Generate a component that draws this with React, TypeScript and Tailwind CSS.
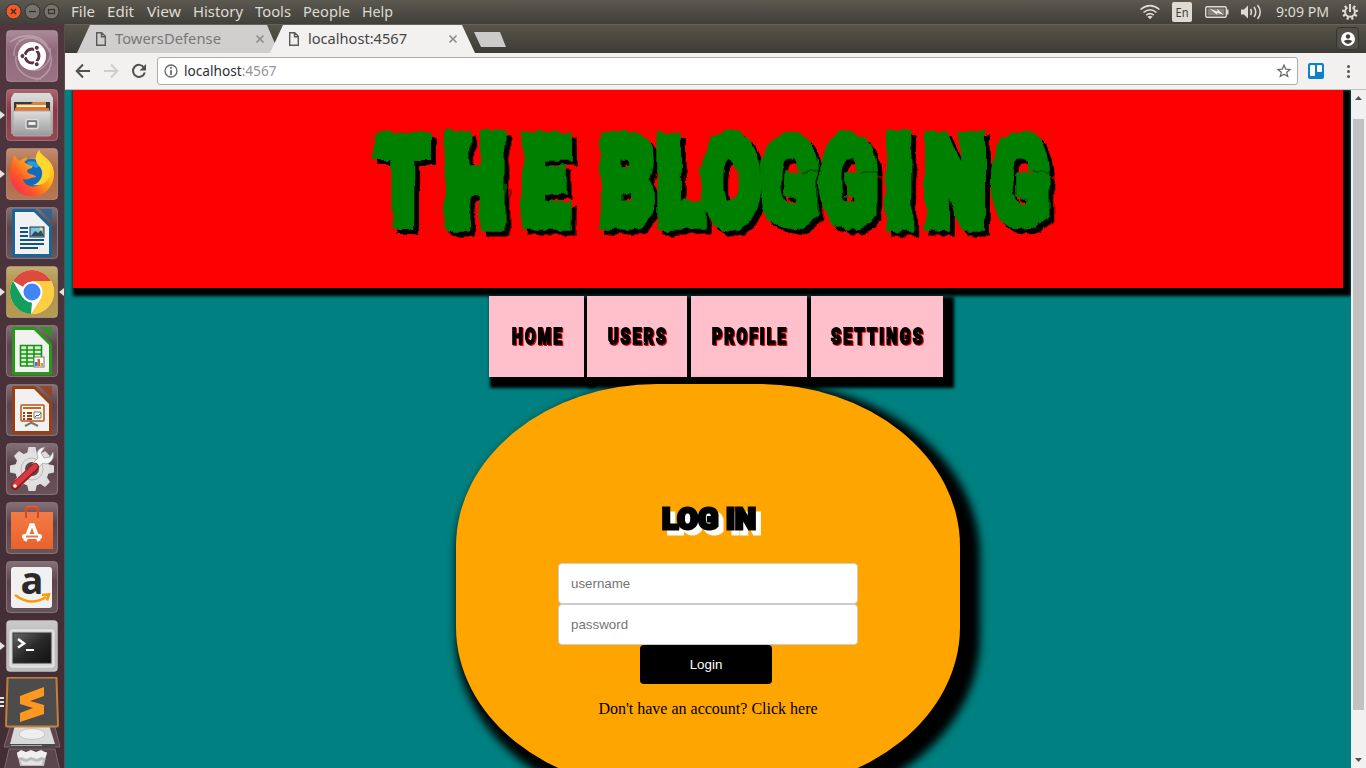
import type { ReactNode } from "react";

const menus: [string, string][] = [
  ["File", "w-9"], ["Edit", "w-10"], ["View", "w-[46px]"], ["History", "w-[62px]"],
  ["Tools", "w-12"], ["People", "w-[59px]"], ["Help", "w-9"],
];

/* Label stretched to the exact width of the desktop's own face. */
function Label({ text, width, size = 15, color = "#dfdbd2", height = 20, baseline = 15 }: { text: string; width: number; size?: number; color?: string; height?: number; baseline?: number }) {
  return (
    <svg width={width} height={height} className="block shrink-0 overflow-visible">
      <text x="0" y={baseline} fill={color} fontSize={size} fontFamily="'Noto Sans', 'Open Sans', sans-serif" textLength={width} lengthAdjust="spacingAndGlyphs">{text}</text>
    </svg>
  );
}

const menuWidths = [24, 27, 34, 50, 36, 47, 31];

function WindowButtons() {
  return (
    <svg width="65" height="24" className="block shrink-0">
      <circle cx="13.500" cy="11.500" r="7.500" fill="#ef5b2d" stroke="#34332e" />
      <path d="M11 9l5 5M16 9l-5 5" stroke="#4b261a" strokeWidth="1.4" />
      <circle cx="32.500" cy="11.500" r="7.500" fill="#75736b" stroke="#34332e" />
      <path d="M29 11.500h7" stroke="#34332e" strokeWidth="1.3" />
      <circle cx="51.500" cy="11.500" r="7.500" fill="#75736b" stroke="#34332e" />
      <rect x="48.500" y="9.500" width="6" height="4" fill="none" stroke="#34332e" strokeWidth="1.2" />
    </svg>
  );
}

function Indicators() {
  return (
    <div className="flex h-6 items-center">
      <svg width="136" height="24" className="block">
        <g fill="none" stroke="#dfdbd2" strokeWidth="1.6">
          <path d="M10.500 9.500Q20 1.800 29.500 9.500M13.500 12.500Q20 7 26.500 12.500M16.200 15.200Q20 12 23.800 15.200" />
        </g>
        <path d="M17.500 16.700Q20 15 22.500 16.700L20 19.200z" fill="#dfdbd2" />
        <rect x="42" y="2" width="20" height="20" rx="2" fill="#dfdbd2" />
        <text x="52" y="17" textAnchor="middle" textLength="13" lengthAdjust="spacingAndGlyphs" fontSize="13" fontFamily="'Noto Sans',sans-serif" fill="#3c3b37">En</text>
        <rect x="75.700" y="6.700" width="20.600" height="10.600" rx="1.500" fill="none" stroke="#dfdbd2" strokeWidth="1.400" />
        <rect x="77.500" y="8.500" width="17" height="7" fill="#85837b" />
        <path d="M97 9.500h1.500v5H97z" fill="#dfdbd2" />
        <path d="M79.500 8.500l8 3.200-.3-2.700 6.300 5.800-6.500-2 .3 2.200z" fill="#f2eee5" />
        <path d="M111 9.500h3l4-4v13l-4-4h-3z" fill="#dfdbd2" />
        <path d="M120.500 9q2 3 0 6M124 7q3.500 5 0 10M127.500 5q5.500 7 0 14" fill="none" stroke="#dfdbd2" strokeWidth="1.500" />
      </svg>
      <div className="ml-[10px]"><Label text="9:09 PM" width={53} size={14.5} /></div>
      <svg width="37" height="24" className="block">
        <g transform="translate(21 12)" fill="none" stroke="#dfdbd2">
          <path d="M-2.500 -4.500A5 5 0 1 0 2.500 -4.500" strokeWidth="2" />
          <path d="M0 -8V0" strokeWidth="2" />
          {[40, 80, 120, 160, 200, 240, 280, 320].map((a) => <path key={a} d="M0 -5.500V-8" strokeWidth="2.200" transform={`rotate(${a})`} />)}
        </g>
      </svg>
    </div>
  );
}

function PageIcon() {
  return <svg width="12" height="16" className="block shrink-0"><path d="M1.700 1.700h5l3.600 3.600v9H1.700zM6.500 2v3.700h3.700" fill="none" stroke="#5a5a5a" strokeWidth="1.400" /></svg>;
}
function CloseIcon() {
  return <svg width="10" height="10" className="block shrink-0"><path d="M1.500 1.500l7 7M8.500 1.500l-7 7" stroke="#8a8a8a" strokeWidth="1.600" /></svg>;
}

function Tile({ bg, mark, children }: { bg: string; mark?: "left" | "both"; children: ReactNode }) {
  return (
    <div className="flex h-[59px] shrink-0">
      <svg width="65" height="53" viewBox="0 0 65 53" className="block shrink-0 overflow-visible">
        {mark && <path d="M0 22l5 4-5 4z" fill="#e5e3df" />}
        {mark === "both" && <path d="M64 22l-5 4 5 4z" fill="#e5e3df" />}
        <rect x="6.500" y=".5" width="51" height="51" rx="3.500" fill={bg} stroke="#fff" strokeOpacity=".3" />
        <rect x="7" y="1" width="50" height="50" rx="3" fill="url(#tileShine)" />
        <g transform="translate(6 0)">{children}</g>
      </svg>
    </div>
  );
}

function Doc({ edge, children }: { edge: string; children: ReactNode }) {
  return (
    <g>
      <path d="M8 2h21l17 17v29q0 2-2 2H8q-2 0-2-2V4q0-2 2-2z" fill={edge} />
      <path d="M33 2h13v12z" fill={edge} opacity=".75" />
      <path d="M9 5h19l15 15v27H9z" fill="#f1f1f1" />
      {children}
    </g>
  );
}

function Dock() {
  return (
    <aside className="flex w-[65px] shrink-0 flex-col overflow-hidden border-r border-[#5e4b52] bg-linear-to-b from-[#50363e] to-[#422d35] pt-[6px]">
      <svg width="0" height="0" className="absolute">
        <defs>
          <linearGradient id="tileShine" x2="0" y2="1"><stop stopColor="#fff" stopOpacity=".25" /><stop offset=".4" stopColor="#fff" stopOpacity=".02" /><stop offset="1" stopColor="#fff" stopOpacity=".1" /></linearGradient>
          <linearGradient id="metal" x2="0" y2="1"><stop stopColor="#ddd" /><stop offset="1" stopColor="#999" /></linearGradient>
          <linearGradient id="fire" x1="1" x2="0" y2="1"><stop stopColor="#fff44a" /><stop offset=".4" stopColor="#ffae13" /><stop offset=".7" stopColor="#ff512b" /><stop offset="1" stopColor="#f51d6b" /></linearGradient>
          <linearGradient id="bag" x2="0" y2="1"><stop stopColor="#f47b45" /><stop offset="1" stopColor="#e9622b" /></linearGradient>
          <linearGradient id="screen" x2="1" y2="1"><stop stopColor="#666" /><stop offset=".5" stopColor="#292929" /><stop offset="1" stopColor="#101010" /></linearGradient>
          <filter id="ragged" x="-5%" y="-10%" width="110%" height="120%">
            <feTurbulence type="fractalNoise" baseFrequency=".11 .04" numOctaves="2" seed="8" />
            <feDisplacementMap in="SourceGraphic" scale="8" xChannelSelector="R" yChannelSelector="G" result="letters" />
            <feColorMatrix in="letters" values="0 0 0 0 0 0 0 0 0 0 0 0 0 0 0 0 0 0 1 0" />
            <feOffset dx="5" dy="5" result="shade" />
            <feMerge><feMergeNode in="shade" /><feMergeNode in="letters" /></feMerge>
          </filter>
          <filter id="rough" x="-10%" y="-20%" width="120%" height="140%">
            <feTurbulence type="fractalNoise" baseFrequency=".25" numOctaves="1" seed="4" />
            <feDisplacementMap in="SourceGraphic" scale="2" xChannelSelector="R" yChannelSelector="G" />
          </filter>
        </defs>
      </svg>
      <Tile bg="#8f6476">
        <g fill="none" stroke="#fff" strokeOpacity=".28">
          <path d="M8 26C7 8 26 2 38 14s9 30-8 36M44 18C47 34 33 45 20 38M4 12C18 2 38 4 43 20M10 26c-2 13 9 23 25 23" strokeWidth="1.500" />
        </g>
        <circle cx="26" cy="26" r="14" fill="#fff" />
        <circle cx="26" cy="26" r="7" fill="none" stroke="#5d3444" strokeWidth="3" />
        {[60, 180, 300].map((a) => <g key={a} transform={`rotate(${a} 26 26)`}><path d="M31 26h5" stroke="#fff" strokeWidth="2" /><circle cx="35.500" cy="26" r="2.500" fill="#5d3444" stroke="#fff" strokeWidth="1" /></g>)}
      </Tile>
      <Tile bg="#8b3340" mark="left">
        <path d="M8 4h36l3 5v36H5V9z" fill="url(#metal)" />
        <path d="M8 13h36v10H8z" fill="#383838" />
        <path d="M10 15h15l2-2h13v8H10z" fill="#d78337" /><path d="M11 16h29v2H11z" fill="#fff0ca" /><path d="M9 19h34v4H9z" fill="#e4752e" />
        <path d="M7 22h38v23q0 2-2 2H9q-2 0-2-2z" fill="url(#metal)" stroke="#aaa" />
        <rect x="20" y="30.500" width="12" height="9" rx="1.500" fill="#777" stroke="#ddd" strokeWidth="1.500" /><rect x="22.500" y="33" width="7" height="3" fill="#eee" />
      </Tile>
      <Tile bg="#ae6841" mark="left">
        <path d="M33 2c2 7 15 9 15 24a22 22 0 0 1-44 1C4 20 6 13 8 7l5 6 8-4-2 5 7-4c8 1 12 3 10-1-3-3-4-5-3-7z" fill="url(#fire)" />
        <path d="M18 14q9-7 17 1c6 7 5 21-4 23-8 2-14-3-14-7 5 2 8-2 13-2-1-3-5-2-8-4-2-3 0-4 4-5l1-3-6-1z" fill="#1269bd" />
        <path d="M21 14q10-3 15 6-3-2-6 0l-3-2-5-1z" fill="#249ce0" />
        <path d="M33 2c-5 7-4 12 1 17 5 6 1 16-7 18 13 2 20-8 16-20 1 2 2 4 2 5 1-8-11-11-12-20z" fill="#ffd62e" />
      </Tile>
      <Tile bg="#594049">
        <Doc edge="#17669a">
          <path d="M14 21h8M14 25h8M14 29h8M14 33h24M14 37h24M14 41h18" stroke="#14547d" strokeWidth="2" />
          <rect x="24" y="20" width="14" height="10" fill="#79c3e8" stroke="#20384a" /><path d="M25 29l4-5 3 2 3-3 3 6z" fill="#364c4b" /><circle cx="35" cy="22" r="1.500" fill="#ffe04f" />
        </Doc>
      </Tile>
      <Tile bg="#ad9040" mark="both">
        <circle cx="26" cy="26" r="22" fill="#fff" />
        <path d="M26 26L7 15A22 22 0 0 1 45 15H26z" fill="#dd4b3e" />
        <path d="M7 15l9.500 16.500L26 37l-1 11A22 22 0 0 1 7 15z" fill="#129e5c" />
        <path d="M26 15h19a22 22 0 0 1-20 33l10.500-16.500z" fill="#ffcd42" />
        <circle cx="26" cy="26" r="10.500" fill="#fff" /><circle cx="26" cy="26" r="8.500" fill="#4285f4" />
      </Tile>
      <Tile bg="#594049">
        <Doc edge="#259915">
          <path d="M14 20h22v21H14z" fill="#cefbc8" /><path d="M14 20.500h22M14 25h22M14 29h22M14 33h22M14 37h22M14 41h22M14.500 20v21M21 20v21M28 20v21M35.500 20v21" stroke="#218c17" strokeWidth="1.600" />
          <rect x="28" y="32" width="10" height="10" fill="#fff" stroke="#777" /><path d="M29 37h2.500v4H29z" fill="#1785cb" /><path d="M31.500 34H34v7h-2.500z" fill="#e35c20" /><path d="M34.500 38H37v3h-2.500z" fill="#dda224" />
        </Doc>
      </Tile>
      <Tile bg="#594049">
        <Doc edge="#984011">
          <rect x="15" y="21" width="23" height="16" rx="1" fill="#fff8ef" stroke="#ba4f18" strokeWidth="1.500" /><path d="M17 24h18" stroke="#d16126" strokeWidth="2" />
          <path d="M17 29h2M21 29h5M17 32h2M21 32h5M17 35h2M21 35h5" stroke="#9b3b10" strokeWidth="2" /><path d="M28 28h7v6h-7z" fill="#fff" stroke="#777" /><path d="M29 33l2-2 1 1 3-3" fill="none" stroke="#238a34" />
          <path d="M25 37v2l-6 3M26 39l6 3" fill="none" stroke="#777" strokeWidth="2" />
        </Doc>
      </Tile>
      <Tile bg="#594049">
        <g transform="translate(26 26)">
          {[0, 45, 90, 135, 180, 225, 270, 315].map((a) => <path key={a} d="M-5-15l1.500-7h7L5-15z" fill="#ddd" transform={`rotate(${a})`} />)}
          <circle r="12" fill="none" stroke="#e1e1e1" strokeWidth="10" /><circle r="11" fill="none" stroke="#bbb" />
        </g>
        <path d="M31 26l-5-5 6-6q-3-7 3-10l4-1-4 6 3 5 6-1 3-5q2 7-4 11-3 2-6 0z" fill="#f5f5f5" stroke="#999" strokeWidth=".7" />
        <path d="M9 43L29 24" stroke="#921c20" strokeWidth="8" strokeLinecap="round" /><path d="M9 42L29 23.500" stroke="#d53a3c" strokeWidth="5.500" strokeLinecap="round" /><circle cx="9" cy="43" r="1.800" fill="#fff" />
      </Tile>
      <Tile bg="#594049">
        <path d="M20 13V8q0-3 3-3h6q3 0 3 3v5" fill="none" stroke="#e75e32" strokeWidth="2.500" />
        <path d="M5 10h42v37H5z" fill="url(#bag)" />
        <path d="M20 16V8q0-2 3-2h6q3 0 3 2v8" fill="none" stroke="#c94d29" strokeWidth="2" />
        <path d="M19 39l6-16h2l6 16" fill="none" stroke="#fff" strokeWidth="3.600" /><path d="M18.500 34.500h15" stroke="#fff" strokeWidth="5" strokeLinecap="round" /><path d="M20 34.500h12" stroke="#ed7245" strokeWidth="2" />
      </Tile>
      <Tile bg="#594049">
        <rect x="5" y="6" width="41" height="41" rx="3" fill="#f1f1f1" />
        <text x="26" y="33" textAnchor="middle" fontFamily="'Open Sans',sans-serif" fontWeight="700" fontSize="38" fill="#292929">a</text>
        <path d="M9 34q16 12 31 2M36 34l7-.5-2 6" fill="none" stroke="#ff9900" strokeWidth="2.500" />
      </Tile>
      <Tile bg="#b8b8b8" mark="left">
        <rect x="4" y="10" width="44" height="37" rx="2" fill="#d5d5d5" stroke="#eee" /><rect x="7" y="13" width="38" height="30" fill="url(#screen)" stroke="#333" />
        <path d="M12 19l6 4.500-6 4" fill="none" stroke="#fff" strokeWidth="2.500" /><path d="M20 30h8" stroke="#fff" strokeWidth="2" />
      </Tile>
      <svg width="65" height="91" viewBox="0 0 65 91" className="-mt-[2px] block shrink-0">
        <path d="M0 21h4M0 25h4M0 29h4" stroke="#e5e3df" strokeWidth="2" />
        <path d="M10 50h45l5 20H4z" fill="#5c464e" stroke="#7d6870" />
        <path d="M15 48h34l6 19H10z" fill="#dadada" /><ellipse cx="32" cy="57" rx="13" ry="5.500" fill="#eee" stroke="#c3c3c3" /><path d="M10 67h45v4H10z" fill="#4a4a4a" /><path d="M11 68h31v1H11z" fill="#aaa" />
        <path d="M9 72h46l5 22H4z" fill="#5c464e" stroke="#7d6870" />
        <path d="M17 75h30l-3 14H20z" fill="#bcbcbc" /><path d="M17 76l4-3 5 2 5-2 5 2 5-2 6 3-2 5-4-1-4 2-6-2-5 2-4-2-4 1z" fill="#f0f0f0" /><path d="M20 83l6 2 5-2 6 2 6-2-1 5H22z" fill="#e3e3e3" />
        <path d="M7.500 1.500q0-1 1-1h47q1 0 1 1l1.500 47q0 1-1 1H7q-1 0-1-1z" fill="#4c4c4c" stroke="#c1813c" strokeWidth="2" />
        <path d="M20 19l24-9v9l-14 5 14 4v9l-24 8v-9l13-5-13-4z" fill="#ff9820" />
      </svg>
    </aside>
  );
}

function Toolbar() {
  return (
    <div className="flex h-[37px] shrink-0 items-center border-b border-[#c4c3c1] bg-[#f2f1f0]">
      <svg width="92" height="36" className="block shrink-0">
        <path d="M25 18H12M18 11.500L11.700 18l6.300 6.500" fill="none" stroke="#505050" strokeWidth="2" />
        <path d="M39 18h13M46 11.500l6.300 6.500-6.300 6.500" fill="none" stroke="#cecece" strokeWidth="2" />
        <path d="M79 14.500a6 6 0 1 0 .8 5" fill="none" stroke="#505050" strokeWidth="2" /><path d="M81 11v6.500h-6.500z" fill="#505050" />
      </svg>
      <div className="flex h-7 w-[1141px] items-center justify-between rounded-[3px] border border-[#adacab] bg-white pr-[5px] pl-[6px]">
        <div className="flex items-center">
          <svg width="14" height="14" className="mr-[6px]"><circle cx="7" cy="7" r="6" fill="none" stroke="#666" strokeWidth="1.300" /><path d="M7 6v5M7 3v1.700" stroke="#666" strokeWidth="1.700" /></svg>
          <svg width="93" height="20" className="block overflow-visible">
            <text x="0" y="15" fill="#303030" fontSize="14.500" fontFamily="'Noto Sans',sans-serif" textLength="92.500" lengthAdjust="spacingAndGlyphs">localhost<tspan fill="#969696">:4567</tspan></text>
          </svg>
        </div>
        <svg width="16" height="16"><path d="M8 2l1.700 4.100 4.400.3-3.400 2.900 1.100 4.300L8 11.300l-3.800 2.300 1.100-4.300-3.400-2.900 4.400-.3z" fill="none" stroke="#666" strokeWidth="1.200" /></svg>
      </div>
      <svg width="68" height="36" className="block"><rect x="10" y="10" width="16" height="16" rx="2" fill="#0a83ca" /><rect x="12" y="12" width="5" height="11" rx="1" fill="#fff" /><rect x="19" y="12" width="5" height="7" rx="1" fill="#fff" /><circle cx="50.500" cy="13.500" r="1.500" fill="#555" /><circle cx="50.500" cy="18.500" r="1.500" fill="#555" /><circle cx="50.500" cy="23.500" r="1.500" fill="#555" /></svg>
    </div>
  );
}

/* Each letter of the wordmark: character, centre and outline weight. */
const titleLetters: [string, number, number][] = [
  ["T", 403, 12], ["H", 475, 16], ["E", 545, 13], [" ", 590, 0],
  ["B", 627, 13], ["L", 680, 13], ["O", 730, 13], ["G", 789, 11],
  ["G", 848, 11], ["I", 899, 17], ["N", 955, 15], ["G", 1020, 11],
];

const navItems = [
  { name: "HOME", box: "w-[95px]", text: 52 },
  { name: "USERS", box: "ml-[3px] w-[100px]", text: 60 },
  { name: "PROFILE", box: "ml-1 w-[116px]", text: 76 },
  { name: "SETTINGS", box: "ml-1 w-[132px]", text: 94 },
];

function BlogPage() {
  return (
    <main className="min-w-0 flex-1 overflow-hidden bg-[#008080] pl-2">
      <header className="h-[198px] w-[1270px] bg-[#ff0000] shadow-[4px_4px_3px_4px_#000]">
        <h1>
          <svg width="1270" height="198" viewBox="73 90 1270 198" className="block">
            <g filter="url(#ragged)">
              <text transform="scale(.7 1)" y="223" fill="#008000" stroke="#008000" fontFamily="Roboto, sans-serif" fontWeight="900" fontSize="119" textAnchor="middle">
                {titleLetters.map(([char, centre, weight], i) => <tspan key={i} x={centre / 0.7} strokeWidth={weight}>{char}</tspan>)}
              </text>
            </g>
          </svg>
        </h1>
      </header>
      <nav className="mt-2 ml-[416px] flex h-[81px]">
        {navItems.map((n) => (
          <a key={n.name} className={`flex items-center justify-center shadow-[6px_6px_3px_5px_#000] ${n.box}`}>
            <span className="flex h-full w-full items-center justify-center bg-[#ffc0cb]">
              <svg width={n.text} height="24" className="block overflow-visible drop-shadow-[1px_1px_0_#f00]">
                <text x="1" y="19" filter="url(#rough)" fill="#000" stroke="#000" strokeWidth="1.8" fontFamily="Roboto,sans-serif" fontSize="22" fontWeight="900" letterSpacing="3" textLength={n.text} lengthAdjust="spacingAndGlyphs">{n.name}</text>
              </svg>
            </span>
          </a>
        ))}
      </nav>
      <section className="relative mt-[7px] ml-[383px] flex h-[405px] w-[504px] flex-col items-center rounded-[40%] bg-[#ffa500] pt-[116px] shadow-[10px_10px_8px_10px_#000]">
        <h2>
          <svg width="96" height="40" className="block overflow-visible drop-shadow-[5px_5px_0_#fff]">
            <text x="2" y="29" fill="#000" stroke="#000" strokeWidth="3" fontFamily="Roboto,sans-serif" fontSize="30" fontWeight="900" textLength="94" lengthAdjust="spacingAndGlyphs">LOG IN</text>
          </svg>
        </h2>
        <form className="mt-[23px] flex flex-col font-['Liberation_Sans',sans-serif] text-[13.333px]">
          <input className="h-[41px] w-[300px] rounded border border-[#ccc] bg-white px-3 placeholder:text-[#757575]" placeholder="username" />
          <input className="h-[41px] w-[300px] rounded border border-[#ccc] bg-white px-3 placeholder:text-[#757575]" placeholder="password" type="password" />
          <button type="button" className="ml-[82px] h-[39px] w-[132px] rounded bg-black text-white">Login</button>
        </form>
        <p className="mt-[13px] font-['Liberation_Serif',serif] text-base text-black">Don't have an account? Click here</p>
      </section>
    </main>
  );
}

export default function App() {
  return (
    <div className="flex h-[768px] w-[1366px] flex-col overflow-hidden font-['Noto_Sans',sans-serif]">
      <header className="flex h-6 shrink-0 items-center justify-between bg-linear-to-b from-[#5b594f] to-[#403f3a]">
        <div className="flex items-center">
          <WindowButtons />
          <div className="flex pl-[6px]">
            {menus.map(([name, w], i) => <div key={name} className={w}><Label text={name} width={menuWidths[i]} /></div>)}
          </div>
        </div>
        <Indicators />
      </header>
      <div className="flex min-h-0 flex-1">
        <Dock />
        <div className="flex w-[1301px] shrink-0 flex-col">
          <div className="flex h-[29px] shrink-0 items-start justify-between border-t border-[#656257] bg-linear-to-b from-[#575549] to-[#3c3b37]">
            <div className="flex h-7">
              <div className="ml-3 flex w-[202px] items-center bg-[#d0cfce] pl-[18px] [clip-path:polygon(0_100%,13px_0,190px_0,100%_100%)]">
                <PageIcon /><span className="mr-[34px] ml-2"><Label text="TowersDefense" width={106} color="#777" /></span><CloseIcon />
              </div>
              <div className="-ml-[9px] flex w-[205px] items-center bg-[#f2f1f0] pl-[18px] [clip-path:polygon(0_100%,13px_0,192px_0,100%_100%)]">
                <PageIcon /><span className="mr-[41px] ml-2"><Label text="localhost:4567" width={99} color="#454545" /></span><CloseIcon />
              </div>
              <div className="mt-[7px] -ml-px h-[15px] w-8 bg-[#cccbca] [clip-path:polygon(0_0,26px_0,100%_100%,7px_100%)]" />
            </div>
            <div className="mt-[2px] mr-[7px] flex h-[23px] w-[23px] items-center justify-center rounded border border-[#35342f] bg-[#504f48]">
              <svg width="14" height="14"><circle cx="7" cy="7" r="7" fill="#fff" /><circle cx="7" cy="4.500" r="2.200" fill="#43423d" /><path d="M2.800 9q4.200-2.500 8.400 0-1.500 3-4.200 3T2.800 9z" fill="#43423d" /></svg>
            </div>
          </div>
          <Toolbar />
          <div className="flex min-h-0 flex-1">
            <BlogPage />
            <div className="flex w-[15px] shrink-0 flex-col items-center justify-between bg-[#f1f1f1]">
              <svg width="15" height="15"><path d="M4 10l3.500-4 3.500 4z" fill="#505050" /></svg>
              <div className="mt-[14px] mb-auto h-[591px] w-[11px] bg-[#c1c1c1]" />
              <svg width="15" height="15"><path d="M4 5l3.500 4L11 5z" fill="#505050" /></svg>
            </div>
          </div>
        </div>
      </div>
    </div>
  );
}
